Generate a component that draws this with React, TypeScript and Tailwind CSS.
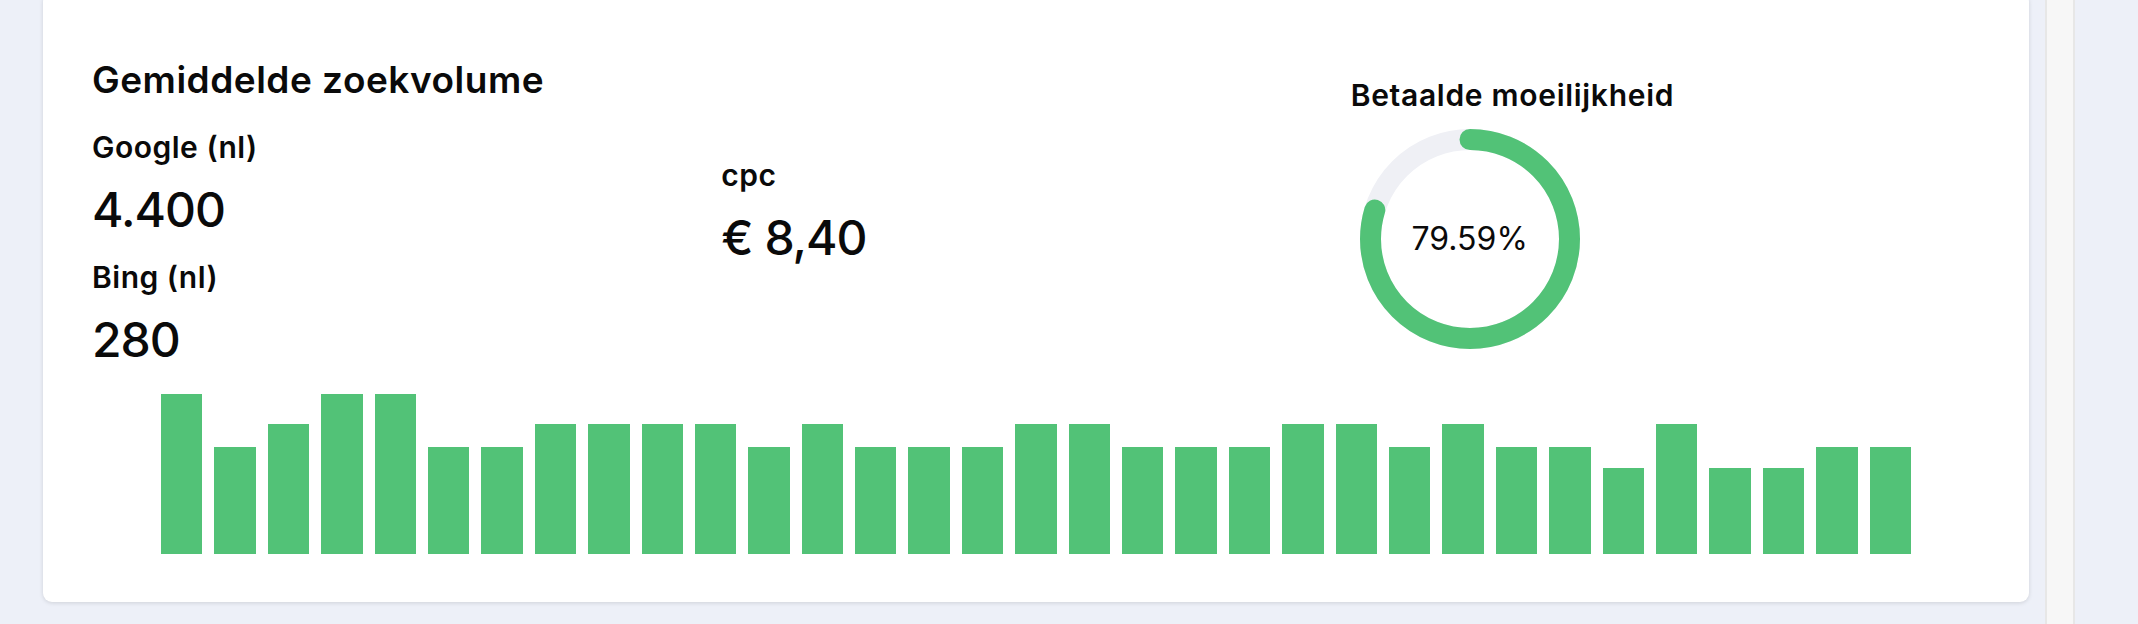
const volumes = [
  5400, 3600, 4400, 5400, 5400, 3600, 3600, 4400, 4400, 4400, 4400, 3600, 4400, 3600, 3600, 3600, 4400,
  4400, 3600, 3600, 3600, 4400, 4400, 3600, 4400, 3600, 3600, 2900, 4400, 2900, 2900, 3600, 3600,
]

function Stat({ label, value, className = '' }: { label: string; value: string; className?: string }) {
  return (
    <div className={className}>
      <p className="text-[30px] leading-[36px] font-semibold tracking-[0.5px]">{label}</p>
      <p className="mt-[17px] text-[48px] leading-[56px] font-medium tracking-[-1px]">{value}</p>
    </div>
  )
}

function Donut({ percent }: { percent: number }) {
  const r = 99.5
  const c = 2 * Math.PI * r
  return (
    <div className="relative w-[220px] h-[220px]">
      <svg width="220" height="220" viewBox="0 0 220 220" className="-rotate-90">
        <circle cx="110" cy="110" r={r} fill="none" stroke="#eff0f5" strokeWidth="21" />
        <circle
          cx="110"
          cy="110"
          r={r}
          fill="none"
          stroke="#52c277"
          strokeWidth="21"
          strokeLinecap="round"
          strokeDasharray={`${(percent / 100) * c} ${c}`}
        />
      </svg>
      <span className="absolute inset-0 flex items-center justify-center text-[32px] leading-none">
        {percent.toFixed(2)}%
      </span>
    </div>
  )
}

export default function App() {
  const max = Math.max(...volumes)

  return (
    <div className="min-h-screen flex bg-[#edf0f8] text-[#0a0a0a] font-['Inter',sans-serif] overflow-hidden">
      <main className="flex-1 pl-[43px] pr-[16px]">
        <section className="-mt-[7px] bg-white rounded-[9px] shadow-[0_1px_4px_rgba(0,0,0,0.13)] pt-[65px] px-[49px] pb-[48px]">
          <div className="grid grid-cols-3 items-center">
            <div>
              <h2 className="text-[37px] leading-[44px] font-semibold tracking-[0.5px]">Gemiddelde zoekvolume</h2>
              <Stat label="Google (nl)" value="4.400" className="mt-[27px]" />
              <Stat label="Bing (nl)" value="280" className="mt-[21px]" />
            </div>

            <Stat label="cpc" value="€ 8,40" className="-mt-[4px]" />

            <div>
              <p className="text-[30px] leading-[36px] font-semibold tracking-[0.7px]">Betaalde moeilijkheid</p>
              <div className="mt-[16px] pl-[9px]">
                <Donut percent={79.59} />
              </div>
            </div>
          </div>

          <div className="mt-[26px] px-[69px] h-[160px] flex items-end gap-[12px]">
            {volumes.map((v, i) => (
              <div key={i} className="flex-1 bg-[#52c277]" style={{ height: `${(v / max) * 160}px` }} />
            ))}
          </div>
        </section>
      </main>

      <aside className="w-[30px] bg-[#f7f7f7] border-x-2 border-[#e7e7e7]" />
      <div className="w-[63px]" />
    </div>
  )
}
